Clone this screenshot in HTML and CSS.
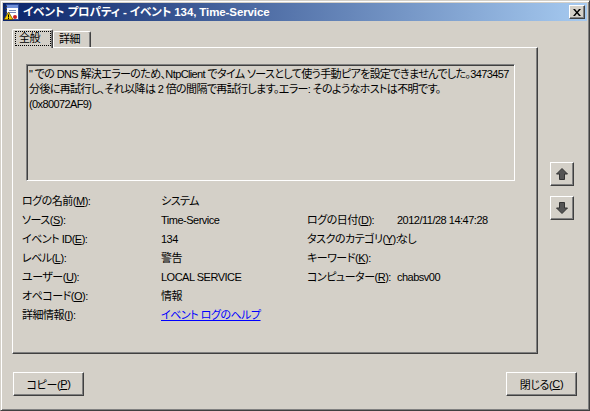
FILE: index.html
```html
<!DOCTYPE html>
<html lang="ja">
<head>
<meta charset="utf-8">
<title>イベント プロパティ</title>
<link rel="stylesheet" href="styles.css">
</head>
<body>
<div class="window">
  <div class="titlebar">
    <svg class="app-icon" width="16" height="16" viewBox="0 0 16 16">
      <rect x="2.5" y="0.5" width="12" height="15" fill="#fff" stroke="#2a4a9a"/>
      <rect x="3" y="1" width="11" height="3" fill="#6f8fd8"/>
      <line x1="5" y1="6.5" x2="12" y2="6.5" stroke="#7a8ab8"/>
      <line x1="5" y1="8.5" x2="12" y2="8.5" stroke="#7a8ab8"/>
      <rect x="1" y="2" width="2" height="1" fill="#333"/>
      <rect x="1" y="5" width="2" height="1" fill="#333"/>
      <rect x="1" y="8" width="2" height="1" fill="#333"/>
      <path d="M4.5 8 L9 15.5 L0 15.5 Z" fill="#f5d000" stroke="#6a4a00" stroke-width="0.8"/>
      <rect x="4" y="10.5" width="1" height="3" fill="#000"/>
      <rect x="4" y="14" width="1" height="1" fill="#000"/>
      <circle cx="11" cy="13" r="2" fill="#d02020"/>
    </svg>
    <span class="title">イベント プロパティ - イベント 134, Time-Service</span>
    <button class="btn close-btn" aria-label="閉じる">
      <svg width="8" height="7" viewBox="0 0 8 7">
        <path d="M0 0 L2 0 L4 2.5 L6 0 L8 0 L5 3.5 L8 7 L6 7 L4 4.5 L2 7 L0 7 L3 3.5 Z" fill="#000"/>
      </svg>
    </button>
  </div>

  <div class="body">
    <div class="main">
      <div class="tabs">
        <div class="tab active"><span class="focus">全般</span></div>
        <div class="tab">詳細</div>
      </div>
      <div class="panel">
        <div class="desc">" での DNS 解決エラーのため、NtpClient でタイム ソースとして使う手動ピアを設定できませんでした。3473457<br>分後に再試行し、それ以降は 2 倍の間隔で再試行します。エラー: そのようなホストは不明です。<br>(0x80072AF9)</div>
        <div class="props">
          <span>ログの名前(<u>M</u>):</span><span>システム</span><span></span><span></span>
          <span>ソース(<u>S</u>):</span><span>Time-Service</span><span>ログの日付(<u>D</u>):</span><span>2012/11/28 14:47:28</span>
          <span>イベント ID(<u>E</u>):</span><span>134</span><span>タスクのカテゴリ(<u>Y</u>):</span><span>なし</span>
          <span>レベル(<u>L</u>):</span><span>警告</span><span>キーワード(<u>K</u>):</span><span></span>
          <span>ユーザー(<u>U</u>):</span><span>LOCAL SERVICE</span><span>コンピューター(<u>R</u>):</span><span>chabsv00</span>
          <span>オペコード(<u>O</u>):</span><span>情報</span><span></span><span></span>
          <span>詳細情報(<u>I</u>):</span><span><a class="link" href="#">イベント ログのヘルプ</a></span><span></span><span></span>
        </div>
      </div>
    </div>
    <div class="side">
      <button class="btn nav-btn up" aria-label="前へ">
        <svg width="12" height="12" viewBox="0 0 12 12">
          <path d="M6 0.5 L11.5 6 L8.5 6 L8.5 11.5 L3.5 11.5 L3.5 6 L0.5 6 Z" fill="#555" stroke="#333" stroke-width="1"/>
        </svg>
      </button>
      <button class="btn nav-btn down" aria-label="次へ">
        <svg width="12" height="12" viewBox="0 0 12 12">
          <path d="M6 11.5 L11.5 6 L8.5 6 L8.5 0.5 L3.5 0.5 L3.5 6 L0.5 6 Z" fill="#555" stroke="#333" stroke-width="1"/>
        </svg>
      </button>
    </div>
  </div>

  <div class="footer">
    <button class="btn push">コピー(<u>P</u>)</button>
    <button class="btn push">閉じる(<u>C</u>)</button>
  </div>
</div>
</body>
</html>
```

FILE: styles.css
```css
* { box-sizing: border-box; }

html, body {
  margin: 0;
  padding: 0;
  background: #d4d0c8;
}

body {
  font-family: "Liberation Sans", "Noto Sans CJK JP", sans-serif;
  font-size: 11px;
  letter-spacing: -0.4px;
  font-feature-settings: "palt";
  color: #000;
}

.window {
  width: 590px;
  height: 411px;
  background: #d4d0c8;
  border: 1px solid;
  border-color: #d4d0c8 #404040 #404040 #d4d0c8;
  box-shadow: inset 1px 1px #fff, inset -1px -1px #808080;
  padding: 2px;
  display: flex;
  flex-direction: column;
}

.titlebar {
  height: 18px;
  display: flex;
  align-items: center;
  background: linear-gradient(to right, #0a246a, #a6caf0);
  color: #fff;
  padding-left: 1px;
  padding-right: 2px;
}

.app-icon {
  flex: none;
  margin-right: 3px;
}

.title {
  font-weight: bold;
  font-size: 11.5px;
  letter-spacing: -0.1px;
  line-height: 18px;
  white-space: nowrap;
  flex: 1;
}

.btn {
  font: inherit;
  letter-spacing: inherit;
  color: #000;
  background: #d4d0c8;
  border: 1px solid;
  border-color: #fff #404040 #404040 #fff;
  box-shadow: inset -1px -1px #808080, inset 1px 1px #d4d0c8;
  padding: 0;
  margin: 0;
  display: flex;
  align-items: center;
  justify-content: center;
}

.close-btn {
  width: 16px;
  height: 14px;
}

.body {
  display: flex;
  padding-top: 8px;
}

.main {
  margin-left: 9px;
  width: 526px;
  display: flex;
  flex-direction: column;
}

.tabs {
  height: 18px;
  display: flex;
  align-items: flex-end;
  position: relative;
  z-index: 1;
}

.tab {
  height: 16px;
  padding: 0 5px;
  line-height: 14px;
  border-top: 1px solid #fff;
  border-left: 1px solid #fff;
  border-right: 1px solid #404040;
  box-shadow: inset -1px 0 #808080;
  border-radius: 2px 2px 0 0;
  background: #d4d0c8;
  white-space: nowrap;
  width: 38px;
}

.tab.active {
  height: 19px;
  width: 41px;
  margin-bottom: -1px;
  padding: 1px 1px 1px 2px;
  border-right: 1px solid #404040;
}

.focus {
  display: block;
  height: 15px;
  line-height: 13px;
  border: 1px dotted #000;
  padding-left: 3px;
}

.panel {
  height: 307px;
  border: 1px solid;
  border-color: #fff #404040 #404040 #fff;
  box-shadow: inset -1px -1px #808080;
  padding: 16px 22px 0 13px;
}

.desc {
  height: 117px;
  border: 1px solid;
  border-color: #808080 #fff #fff #808080;
  box-shadow: inset 1px 1px #404040, inset -1px -1px #d4d0c8;
  padding: 2px 1px 0 2px;
  line-height: 15px;
  letter-spacing: -0.62px;
  white-space: nowrap;
  overflow: hidden;
}

.props {
  margin-top: 11px;
  margin-left: -4px;
  display: grid;
  grid-template-columns: 139px 146px 90px auto;
  grid-auto-rows: 19px;
  line-height: 19px;
  letter-spacing: -0.5px;
  white-space: nowrap;
}

.link {
  color: #0000ff;
  text-decoration: underline;
}

.side {
  margin-left: 12px;
  display: flex;
  flex-direction: column;
}

.nav-btn {
  width: 24px;
  height: 24px;
}

.nav-btn.up { margin-top: 133px; }
.nav-btn.down { margin-top: 10px; }

.footer {
  display: flex;
  justify-content: space-between;
  padding: 18px 10px 0 10px;
}

.push {
  width: 71px;
  height: 24px;
}
```
